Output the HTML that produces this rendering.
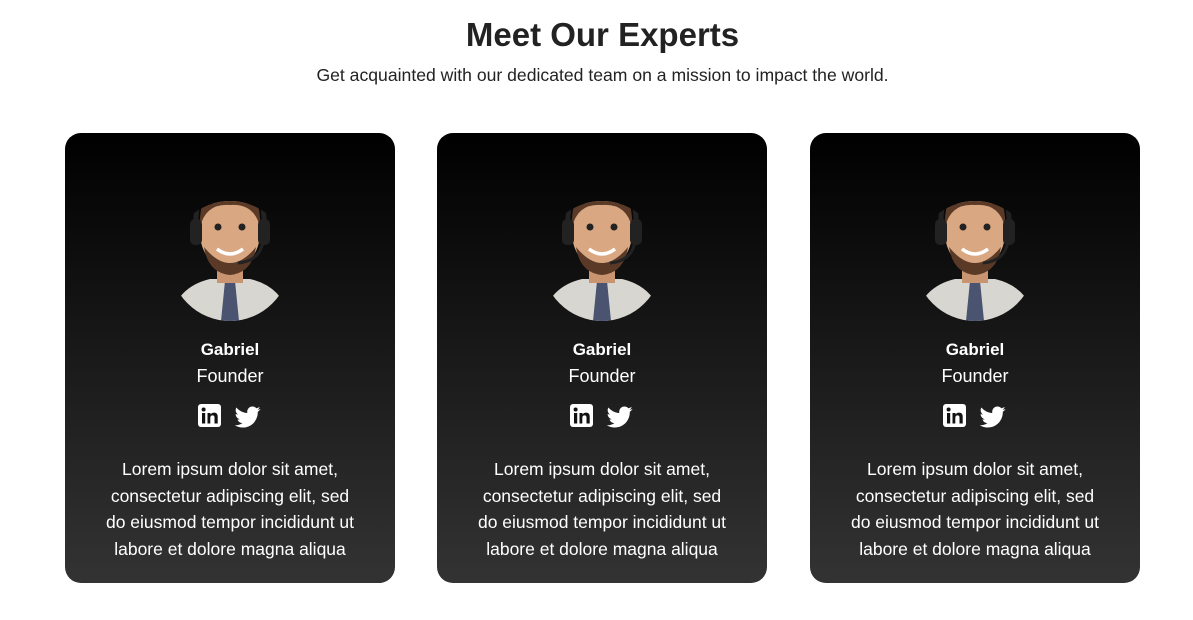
<!DOCTYPE html>
<html><head><style>
body{margin:0;background:#fff;font-family:"Liberation Sans",sans-serif;width:1193px;height:620px;overflow:hidden}
h1{margin:0;position:absolute;top:16px;left:0;width:1205px;text-align:center;font-size:33px;color:#222;font-weight:bold}
.sub{position:absolute;top:65px;left:0;width:1205px;text-align:center;font-size:17.6px;color:#222}
.card{position:absolute;top:133px;width:330px;height:450px;border-radius:16px;background:linear-gradient(#000,#333);color:#fff;text-align:center}
.av{position:absolute;left:105px;top:42px}
.name{position:absolute;top:207px;width:100%;font-weight:bold;font-size:17px}
.role{position:absolute;top:233px;width:100%;font-size:18px}
.ic{position:absolute;top:269px;left:132px}
.txt{position:absolute;top:323px;left:35px;width:260px;font-size:17.5px;line-height:26.5px}
</style></head><body>
<h1>Meet Our Experts</h1>
<div class="sub">Get acquainted with our dedicated team on a mission to impact the world.</div>
<div class="card" style="left:65px"></div>
<div class="card" style="left:437px"></div>
<div class="card" style="left:810px"></div>
<script>
var svg='<svg class="av" width="120" height="146" viewBox="0 0 120 146"><defs><clipPath id="c"><circle cx="60" cy="86" r="60"/></clipPath></defs><g clip-path="url(#c)"><path d="M0 146 Q6 112 40 104 L80 104 Q114 112 120 146Z" fill="#d8d6d0"/><path d="M55 106 L65 106 L69 146 L51 146Z" fill="#4a5370"/><rect x="47" y="86" width="26" height="22" fill="#c99470"/><ellipse cx="60" cy="58" rx="30" ry="36" fill="#d9a882"/><path d="M30 52 Q28 12 60 10 Q92 12 90 52 Q84 28 60 30 Q36 28 30 52Z" fill="#5a3a26"/><path d="M34 72 Q60 104 86 72 Q82 98 60 100 Q38 98 34 72Z" fill="#5a3a26"/><path d="M26 52 Q24 6 60 4 Q96 6 94 52" stroke="#222" stroke-width="5" fill="none"/><rect x="20" y="44" width="12" height="26" rx="5" fill="#222"/><rect x="88" y="44" width="12" height="26" rx="5" fill="#222"/><path d="M93 66 Q90 86 68 88" stroke="#222" stroke-width="3" fill="none"/><circle cx="48" cy="52" r="3.5" fill="#222"/><circle cx="72" cy="52" r="3.5" fill="#222"/><path d="M47 74 Q60 84 73 74" stroke="#fff" stroke-width="3.5" fill="none"/></g></svg>';
var ic='<svg class="ic" width="70" height="28" viewBox="0 0 70 28"><rect x="1" y="2" width="23" height="23" rx="3" fill="#fff"/><rect x="5" y="11" width="3.2" height="10.5" fill="#111"/><circle cx="6.6" cy="7.5" r="2" fill="#111"/><path d="M10.5 11h3v1.5q1.2-1.9 3.6-1.9q3.6 0 3.6 4.1V21.5h-3.2v-5.8q0-2.3-1.8-2.3q-2.4 0-2.4 2.6v5.5h-2.8Z" fill="#111"/><g transform="translate(38,2) scale(1.08)"><path d="M23.6 4.6c-.9.4-1.8.6-2.8.8 1-.6 1.8-1.6 2.1-2.7-.9.6-2 1-3.1 1.2C18.9 2.9 17.6 2.3 16.2 2.3c-2.7 0-4.9 2.2-4.9 4.9 0 .4 0 .8.1 1.1C7.3 8.1 3.700 6.1 1.3 3.2.9 3.900.6 4.8.6 5.7c0 1.7.9 3.2 2.2 4.1-.8 0-1.6-.2-2.2-.6v.1c0 2.4 1.7 4.4 3.9 4.8-.4.1-.8.2-1.3.2-.3 0-.6 0-.9-.1.6 2 2.4 3.4 4.600 3.4-1.7 1.3-3.8 2.1-6.1 2.1-.4 0-.8 0-1.2-.1 2.2 1.4 4.8 2.2 7.5 2.2 9.1 0 14-7.5 14-14v-.6c1-.7 1.8-1.6 2.5-2.5z" fill="#fff"/></g></svg>';
document.querySelectorAll('.card').forEach(function(c){c.innerHTML=svg+'<div class="name">Gabriel</div><div class="role">Founder</div>'+ic+'<div class="txt">Lorem ipsum dolor sit amet, consectetur adipiscing elit, sed do eiusmod tempor incididunt ut labore et dolore magna aliqua</div>';});
</script>
</body></html>
